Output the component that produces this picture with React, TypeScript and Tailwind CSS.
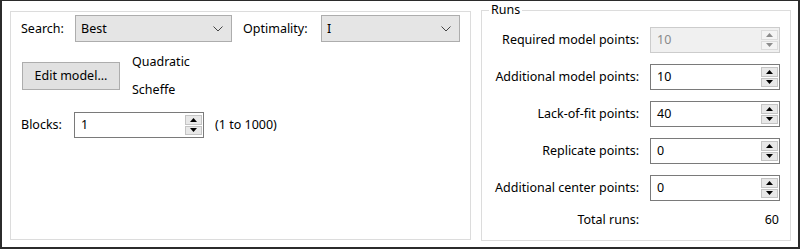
import React from 'react';

const font = { fontFamily: '"Noto Sans", "Segoe UI", sans-serif' };

const Chevron = () => (
    <svg width="10" height="6" viewBox="0 0 10 6" className="shrink-0">
        <polyline points="0.5,0.5 5,5 9.5,0.5" fill="none" stroke="#444" strokeWidth="1" />
    </svg>
);

const Arrow = ({ up, disabled }: { up?: boolean; disabled?: boolean }) => (
    <svg width="7" height="4" viewBox="0 0 7 4">
        <polygon points={up ? '0,4 7,4 3.5,0' : '0,0 7,0 3.5,4'} fill={disabled ? '#8c8c8c' : '#000'} />
    </svg>
);

const Combo = ({ value, width }: { value: string; width: string }) => (
    <div className={`${width} h-[27px] flex items-center justify-between bg-[#e5e5e5] border border-[#adadad] pl-[5px] pr-[8px]`}>
        <span>{value}</span>
        <Chevron />
    </div>
);

const SpinBox = ({ value, width = 'w-[130px]', disabled }: { value: string; width?: string; disabled?: boolean }) => (
    <div
        className={`${width} h-[26px] flex items-stretch border ${
            disabled ? 'border-[#cccccc] bg-[#f0f0f0] text-[#8a8a8a]' : 'border-[#7a7a7a] bg-white'
        }`}
    >
        <span className="flex-1 flex items-center pl-[6px]">{value}</span>
        <div className="flex flex-col gap-[1px] py-[2px] pr-[1px]">
            <div className={`w-[17px] flex-1 flex items-center justify-center border ${disabled ? 'border-[#dcdcdc] bg-[#f4f4f4]' : 'border-[#c4c4c4] bg-[#e8e8e8]'}`}>
                <Arrow up disabled={disabled} />
            </div>
            <div className={`w-[17px] flex-1 flex items-center justify-center border ${disabled ? 'border-[#dcdcdc] bg-[#f4f4f4]' : 'border-[#c4c4c4] bg-[#e8e8e8]'}`}>
                <Arrow disabled={disabled} />
            </div>
        </div>
    </div>
);

const runs = [
    { label: 'Required model points:', value: '10', disabled: true },
    { label: 'Additional model points:', value: '10' },
    { label: 'Lack-of-fit points:', value: '40' },
    { label: 'Replicate points:', value: '0' },
    { label: 'Additional center points:', value: '0' },
];

export default function App() {
    return (
        <div
            style={font}
            className="w-[800px] h-[249px] bg-white text-black text-[12.5px] leading-4 border-t border-l-2 border-r-2 border-b-2 border-[#2b2b2b] flex items-start"
        >
            {/* design panel */}
            <div className="ml-[8px] mt-[10px] w-[461px] h-[229px] border border-[#dcdcdc] pl-[10px] pt-[3px]">
                <div className="flex items-center">
                    <span className="w-[54px]">Search:</span>
                    <Combo value="Best" width="w-[157px]" />
                    <span className="ml-[11px] w-[78px]">Optimality:</span>
                    <Combo value="I" width="w-[139px]" />
                </div>

                <div className="flex items-center mt-[12px]">
                    <div className="ml-[1px] w-[98px] h-[28px] flex items-center justify-center bg-[#e1e1e1] border border-[#adadad]">
                        Edit model...
                    </div>
                    <div className="ml-[12px] flex flex-col gap-[12px]">
                        <span>Quadratic</span>
                        <span>Scheffe</span>
                    </div>
                </div>

                <div className="flex items-center mt-[14px]">
                    <span className="w-[53px]">Blocks:</span>
                    <SpinBox value="1" />
                    <span className="ml-[11px]">(1 to 1000)</span>
                </div>
            </div>

            {/* runs panel */}
            <fieldset className="ml-[10px] mt-[1px] w-[310px] h-[239px] border border-[#dcdcdc] pr-[10px] pt-[9px]">
                <legend className="ml-[7px] px-[2px] leading-4">Runs</legend>
                <div className="grid grid-cols-[1fr_130px] gap-x-[11px] gap-y-[11px] items-center">
                    {runs.map((r) => (
                        <React.Fragment key={r.label}>
                            <span className="text-right">{r.label}</span>
                            <SpinBox value={r.value} disabled={r.disabled} />
                        </React.Fragment>
                    ))}
                    <span className="text-right">Total runs:</span>
                    <span className="text-right pr-[1px]">60</span>
                </div>
            </fieldset>
        </div>
    );
}
